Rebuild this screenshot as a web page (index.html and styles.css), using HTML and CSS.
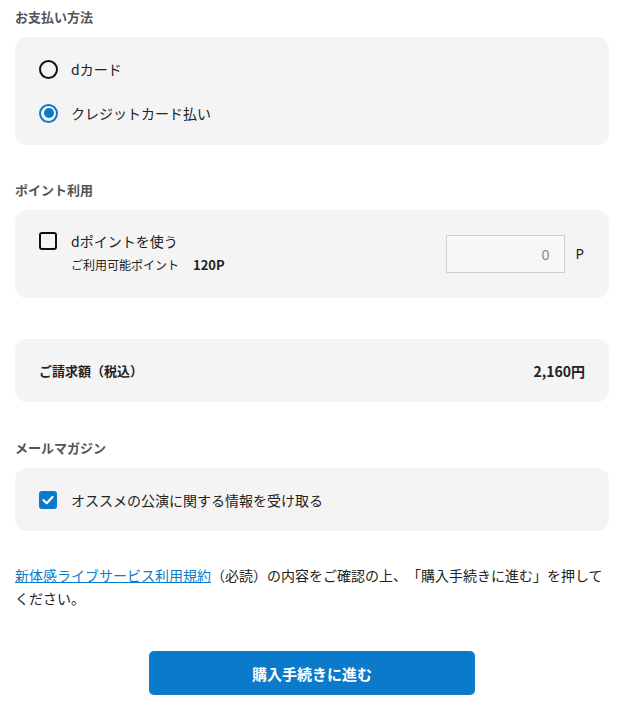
FILE: index.html
```html
<!DOCTYPE html>
<html lang="ja">
<head>
<meta charset="utf-8">
<link rel="stylesheet" href="styles.css">
</head>
<body>
<main class="page">
  <h2 class="heading first">お支払い方法</h2>
  <section class="card payment">
    <div class="option"><span class="radio"></span><span>dカード</span></div>
    <div class="option"><span class="radio checked"></span><span>クレジットカード払い</span></div>
  </section>

  <h2 class="heading">ポイント利用</h2>
  <section class="card points">
    <div class="points-left">
      <span class="checkbox"></span>
      <div class="points-text">
        <div class="line1">dポイントを使う</div>
        <div class="line2">ご利用可能ポイント<b class="avail">120P</b></div>
      </div>
    </div>
    <div class="points-right">
      <div class="input">0</div>
      <span class="unit">P</span>
    </div>
  </section>

  <section class="card total">
    <span>ご請求額（税込）</span>
    <span>2,160円</span>
  </section>

  <h2 class="heading mail-heading">メールマガジン</h2>
  <section class="card mail">
    <span class="checkbox checked"><svg viewBox="0 0 18 18" width="18" height="18"><polyline points="4.5,9.2 7.7,12.2 13.5,6" fill="none" stroke="#fff" stroke-width="2.2" stroke-linecap="round" stroke-linejoin="round"/></svg></span>
    <span>オススメの公演に関する情報を受け取る</span>
  </section>

  <p class="notice"><a class="link" href="#">新体感ライブサービス利用規約</a>（必読）の内容をご確認の上、「購入手続きに進む」を押してください。</p>

  <div class="btn-wrap"><button class="btn">購入手続きに進む</button></div>
</main>
</body>
</html>
```

FILE: styles.css
```css
* { box-sizing: border-box; }
html, body { margin: 0; padding: 0; background: #fff; }
body {
  font-family: "Noto Sans CJK JP", "Noto Sans", sans-serif;
  color: #222;
  font-size: 14px;
  text-spacing-trim: space-all;
}
.page { padding: 0 16px 0 15px; }
.heading {
  margin: 35px 0 10px;
  font-size: 13px;
  line-height: 20px;
  font-weight: bold;
  color: #555;
}
.heading.first { margin-top: 7px; }
.heading.mail-heading { margin-top: 36px; }
.card {
  background: #f4f4f4;
  border-radius: 12px;
  padding: 0 24px;
}
.payment {
  padding-top: 20px;
  padding-bottom: 20px;
  display: flex;
  flex-direction: column;
  gap: 20px;
}
.option {
  display: flex;
  align-items: center;
  height: 24px;
  line-height: 24px;
}
.radio {
  width: 19px;
  height: 19px;
  border: 2px solid #111;
  border-radius: 50%;
  margin-right: 13px;
  flex: none;
  display: flex;
  align-items: center;
  justify-content: center;
}
.radio.checked { border-color: #0b7acb; }
.radio.checked::after {
  content: "";
  width: 10px;
  height: 10px;
  border-radius: 50%;
  background: #0b7acb;
}
.checkbox {
  width: 18px;
  height: 18px;
  border: 2px solid #111;
  border-radius: 3px;
  margin-right: 14px;
  flex: none;
  display: flex;
}
.checkbox.checked {
  border: none;
  background: #0b7acb;
}
.points {
  display: flex;
  justify-content: space-between;
  align-items: center;
  height: 88px;
}
.points-left { display: flex; align-items: flex-start; margin-top: -2px; }
.points-left .checkbox { margin-top: 3px; }
.points-text { display: flex; flex-direction: column; }
.line1 { line-height: 24px; font-size: 14px; }
.line2 { line-height: 24px; font-size: 12px; }
.avail { font-size: 13px; font-weight: bold; margin-left: 14px; }
.points-right { display: flex; align-items: center; margin-right: 1px; }
.input {
  width: 119px;
  height: 38px;
  border: 1px solid #cfcfcf;
  background: #f7f7f7;
  color: #888;
  text-align: right;
  padding-right: 14px;
  line-height: 38px;
  font-size: 14px;
  font-family: "Noto Sans", sans-serif;
}
.unit { margin-left: 11px; font-size: 14px; font-family: "Noto Sans", sans-serif; margin-top: -2px; }
.total {
  margin-top: 41px;
  height: 63px;
  display: flex;
  justify-content: space-between;
  align-items: center;
  font-size: 13px;
  font-weight: bold;
}
.total span:last-child { font-size: 14px; }
.mail {
  height: 63px;
  display: flex;
  align-items: center;
}
.notice {
  margin: 33px 0 0;
  line-height: 23px;
  font-size: 14px;
}
.link { color: #0b7acb; text-decoration: underline; }
.btn-wrap { display: flex; justify-content: center; margin-top: 41px; }
.btn {
  width: 326px;
  height: 44px;
  border: none;
  border-radius: 5px;
  background: #0b7acb;
  color: #fff;
  font-family: "Noto Sans CJK JP", sans-serif;
  font-size: 15px;
  font-weight: bold;
}
```
